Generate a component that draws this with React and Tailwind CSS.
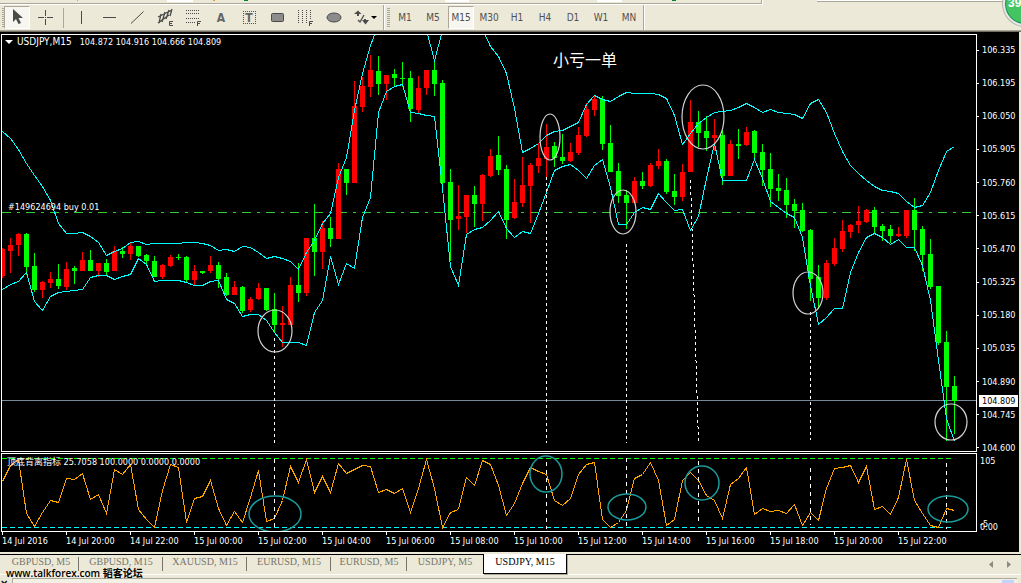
import React, { useState } from "react";
import clsx from "clsx";

// high, low, body top, body bottom, 1 = red (up) / 0 = green (down)
const candles = [
  [248, 278, 249, 276, 1], [238, 273, 245, 251, 1], [233, 256, 234, 245, 1], [233, 275, 234, 267, 0],
  [253, 292, 266, 290, 0], [281, 298, 282, 290, 1], [272, 288, 279, 283, 1], [264, 289, 279, 286, 0],
  [262, 290, 269, 287, 1], [266, 284, 268, 271, 0], [252, 271, 260, 271, 1], [250, 271, 260, 271, 0],
  [263, 277, 263, 271, 1], [259, 275, 263, 272, 0], [246, 271, 251, 271, 1], [247, 258, 251, 254, 0],
  [243, 260, 246, 254, 1], [246, 257, 246, 256, 0], [254, 264, 255, 261, 0], [256, 277, 261, 277, 0],
  [264, 279, 265, 277, 1], [255, 267, 257, 266, 1], [254, 260, 257, 258, 0], [256, 282, 257, 280, 0],
  [265, 285, 271, 280, 1], [271, 274, 271, 273, 0], [256, 273, 265, 271, 1], [262, 288, 265, 279, 0],
  [273, 296, 277, 295, 0], [281, 295, 287, 295, 1], [286, 313, 287, 311, 0], [297, 312, 299, 310, 1],
  [283, 300, 288, 299, 1], [288, 311, 288, 310, 0], [293, 332, 309, 325, 0], [306, 347, 323, 325, 1],
  [277, 325, 285, 325, 1], [263, 302, 285, 293, 0], [238, 296, 238, 293, 1], [204, 276, 238, 252, 0],
  [221, 269, 228, 252, 1], [217, 247, 228, 239, 0], [163, 239, 169, 239, 1], [169, 195, 169, 183, 0],
  [81, 183, 106, 183, 1], [77, 112, 86, 107, 1], [55, 97, 70, 87, 1], [56, 95, 71, 84, 0],
  [75, 100, 75, 84, 1], [69, 86, 74, 78, 0], [62, 87, 78, 79, 0], [71, 122, 78, 109, 0],
  [76, 113, 88, 110, 1], [70, 95, 70, 88, 1], [61, 96, 70, 84, 0], [80, 185, 83, 183, 0],
  [169, 261, 182, 220, 0], [185, 230, 216, 219, 1], [195, 233, 195, 217, 1], [186, 227, 195, 204, 0],
  [174, 221, 175, 204, 1], [149, 177, 156, 176, 1], [136, 175, 155, 170, 0], [165, 239, 169, 220, 0],
  [179, 219, 202, 218, 1], [157, 207, 185, 203, 1], [163, 223, 165, 186, 1], [143, 173, 158, 166, 1],
  [124, 177, 147, 159, 1], [142, 167, 146, 158, 0], [134, 164, 157, 161, 0], [143, 162, 152, 161, 1],
  [127, 155, 135, 153, 1], [103, 137, 109, 136, 1], [95, 116, 99, 110, 1], [96, 150, 99, 144, 0],
  [125, 172, 143, 172, 0], [163, 203, 171, 196, 0], [190, 229, 195, 203, 0], [177, 203, 181, 203, 1],
  [172, 189, 181, 186, 0], [163, 187, 165, 186, 1], [149, 169, 161, 166, 1], [159, 194, 161, 192, 0],
  [174, 205, 191, 197, 0], [164, 201, 172, 197, 1], [100, 172, 122, 172, 1], [111, 147, 122, 133, 0],
  [116, 151, 131, 138, 0], [119, 151, 135, 138, 1], [130, 185, 135, 176, 0], [140, 176, 144, 176, 1],
  [129, 159, 144, 146, 0], [127, 146, 132, 145, 1], [130, 159, 131, 153, 0], [144, 186, 152, 170, 0],
  [153, 207, 169, 189, 0], [174, 201, 188, 191, 0], [178, 218, 190, 205, 0], [199, 228, 204, 211, 0],
  [203, 232, 210, 231, 0], [229, 301, 230, 279, 0], [265, 309, 277, 298, 0], [260, 300, 263, 298, 1],
  [238, 266, 248, 264, 1], [220, 252, 231, 249, 1], [224, 238, 225, 232, 1], [206, 233, 221, 225, 1],
  [209, 223, 210, 222, 1], [207, 234, 210, 227, 0], [224, 241, 226, 231, 0], [225, 243, 229, 236, 0],
  [227, 237, 234, 236, 1], [210, 238, 210, 236, 1], [198, 251, 210, 230, 0], [226, 271, 229, 255, 0],
  [239, 289, 254, 287, 0], [286, 345, 286, 343, 0], [331, 441, 342, 387, 0], [376, 434, 386, 401, 0],
];

// bands, one value per bar
const upperBand = [
  131, 138, 149, 163, 175, 186, 200, 223, 233, 233, 232, 236, 242, 255, 251, 248, 242, 241, 244, 243,
  243, 243, 243, 242, 242, 243, 245, 250, 249, 251, 246, 247, 252, 258, 256, 258, 261, 269, 252, 240,
  223, 213, 177, 157, 110, 73, 45, 24, 10, 5, 5, 10, 15, 30, 60, 30, 5, 5, 5, 10,
  29, 46, 56, 73, 108, 152, 148, 143, 135, 131, 130, 126, 122, 104, 95, 99, 101, 96, 92, 93,
  93, 93, 94, 98, 115, 144, 133, 123, 117, 112, 111, 110, 107, 103, 107, 112, 109, 112, 113, 114,
  118, 103, 99, 112, 133, 151, 165, 173, 180, 186, 190, 191, 193, 201, 207, 205, 192, 170, 151, 146,
];

const lowerBand = [
  289, 284, 281, 272, 301, 310, 296, 292, 291, 290, 289, 277, 275, 275, 279, 276, 274, 258, 264, 281,
  280, 280, 280, 282, 285, 285, 281, 280, 299, 303, 316, 314, 314, 320, 332, 342, 342, 342, 345, 312,
  300, 256, 284, 263, 268, 217, 197, 112, 91, 86, 84, 112, 113, 115, 116, 188, 266, 285, 234, 229,
  227, 220, 211, 228, 237, 231, 233, 213, 192, 170, 166, 164, 170, 178, 165, 159, 187, 224, 224, 212,
  207, 209, 193, 202, 210, 209, 230, 216, 178, 143, 180, 180, 180, 180, 159, 178, 201, 207, 213, 217,
  237, 285, 324, 317, 308, 308, 272, 252, 237, 233, 237, 244, 239, 247, 247, 265, 300, 360, 418, 441,
];

const oscillator = [
  481, 465, 459, 513, 526, 512, 500, 502, 478, 479, 473, 499, 494, 513, 469, 474, 464, 509, 519, 527,
  490, 464, 467, 522, 498, 496, 480, 508, 525, 511, 522, 497, 470, 521, 518, 500, 466, 482, 459, 492,
  476, 492, 463, 473, 469, 465, 466, 492, 489, 493, 488, 512, 488, 459, 488, 527, 512, 509, 477, 485,
  460, 464, 485, 515, 503, 483, 467, 471, 474, 500, 505, 498, 474, 464, 462, 519, 527, 522, 510, 478,
  474, 462, 480, 525, 519, 480, 472, 480, 495, 500, 518, 484, 478, 467, 514, 508, 511, 510, 513, 504,
  525, 512, 520, 488, 468, 467, 465, 482, 466, 509, 506, 514, 497, 459, 500, 513, 525, 527, 508, 510,
];

const priceLabels = [
  "106.335", "106.195", "106.050", "105.905", "105.760", "105.615", "105.470",
  "105.325", "105.180", "105.035", "104.890", "104.745", "104.600",
];

const timeLabels = [
  "14 Jul 2016", "14 Jul 20:00", "14 Jul 22:00", "15 Jul 00:00", "15 Jul 02:00",
  "15 Jul 04:00", "15 Jul 06:00", "15 Jul 08:00", "15 Jul 10:00", "15 Jul 12:00",
  "15 Jul 14:00", "15 Jul 16:00", "15 Jul 18:00", "15 Jul 20:00", "15 Jul 22:00",
];

const periods = ["M1", "M5", "M15", "M30", "H1", "H4", "D1", "W1", "MN"];

const chartTabs = [
  "GBPUSD, M5", "GBPUSD, M15", "XAUUSD, M15", "EURUSD, M15", "EURUSD, M5", "USDJPY, M5", "USDJPY, M15",
];

const priceMarks = [
  [275, 331, 17, 21], [550, 137, 10, 23], [623, 212, 13, 22],
  [703, 117, 21, 32], [808, 293, 15, 21], [951, 422, 16, 18],
];

const oscillatorMarks = [
  [275, 514, 26, 18], [546, 474, 16, 18], [627, 507, 19, 13], [702, 483, 17, 17], [948, 509, 20, 13],
];

const priceGuides = [
  [274, 338, 274, 443], [546, 177, 546, 443], [626, 244, 626, 443], [690, 180, 698, 443], [810, 312, 810, 440],
];

const oscillatorGuides = [
  [274, 459, 527], [546, 462, 529], [626, 458, 529], [698, 461, 524], [810, 468, 525], [946, 463, 529],
];

const toPoints = (values) => values.map((y, i) => `${2 + i * 8},${y}`).join(" ");

const toolIcons = {
  Cursor: (
    <path d="M7 3V16L10 13L12.500 18L15 17L12.500 12H17Z" fill="#4a4a4a" />
  ),
  Crosshair: (
    <path d="M11.500 4V10M11.500 13V19M4 11.500H10M13 11.500H19M11.500 11V12" stroke="#4a4a4a" />
  ),
  "Vertical line": <path d="M11.500 5V18" stroke="#4a4a4a" />,
  "Horizontal line": <path d="M5 11.500H18" stroke="#4a4a4a" />,
  Trendline: <path d="M5 17.500L17.500 5.500" stroke="#4a4a4a" />,
  "Equidistant channel": (
    <g fill="none" stroke="#4a4a4a">
      <path d="M4 11L18 4M4 17L15 9M7 8L5 17M11 6L8 16M15 4L12 13M18 3L16 10" strokeWidth="1.300" />
      <path d="M19 15.500H15.500V19.500H19M15.500 17.500H18" />
    </g>
  ),
  "Fibonacci retracement": (
    <g fill="none" stroke="#4a4a4a">
      <path d="M4 4.500H18M4 7.500H18M4 12.500H18M4 16.500H13" strokeDasharray="1 1" />
      <path d="M15.500 20V15.500H19M15.500 17.500H18" />
    </g>
  ),
  Rectangle: <rect x="5.500" y="7.500" width="12" height="8" rx="1" fill="#8c8c8c" stroke="#4a4a4a" />,
  "Cycle lines": (
    <g fill="none" stroke="#4a4a4a">
      <path d="M4.500 4V18M8.500 4V18M12.500 4V18M16.500 4V13" strokeDasharray="1 1" />
      <path d="M15.500 20V15.500H19M15.500 17.500H18" />
    </g>
  ),
  Ellipse: <ellipse cx="12" cy="11.500" rx="7" ry="4.500" fill="#8c8c8c" stroke="#4a4a4a" />,
};

const ToolButton = ({ name, pressed, onClick, children }) => (
  <button
    type="button"
    aria-label={name}
    title={name}
    onClick={onClick}
    className={clsx(
      "w-[26px] h-[23px] mx-px shrink-0 flex items-center justify-center border text-[10px] text-[#505050]",
      pressed ? "bg-[#f7f6f0] border-[#aca899] border-r-white border-b-white" : "border-transparent"
    )}
  >
    {children}
  </button>
);

const Grip = () => (
  <span className="w-[3px] h-5 ml-[2px] shrink-0 bg-[repeating-linear-gradient(#aca899_0_1px,transparent_1px_2px)]" />
);

const Toolbar = () => {
  const [tool, setTool] = useState("Cursor");
  const [period, setPeriod] = useState("M15");

  const renderTool = (name) => (
    <ToolButton key={name} name={name} pressed={tool === name} onClick={() => setTool(name)}>
      {name === "Text" ? (
        <span className="text-[12px] font-bold text-[#666666]">A</span>
      ) : name === "Text label" ? (
        <span className="w-[13px] h-[13px] flex items-center justify-center border border-dotted border-[#505050] text-[12px] font-bold text-[#666666]">
          T
        </span>
      ) : (
        <svg className="w-[23px] h-[23px] shrink-0" viewBox="0 0 23 23">{toolIcons[name]}</svg>
      )}
    </ToolButton>
  );

  return (
    <header className="relative h-8 shrink-0 overflow-hidden border-b border-[#716f64]">
      {/* lower edge of the toolbar row above */}
      <div className="h-[5px] flex items-start justify-between">
        <div className="w-[763px] h-[5px] flex border-b border-r border-white shadow-[inset_-1px_-1px_#aca899]">
          <span className="w-px h-px ml-[77px] bg-[#aca899]" />
          <span className="w-[26px] h-[2px] ml-[89px] bg-white" />
          <span className="w-[2px] h-px ml-[20px] bg-[#d9a520]" />
          <span className="w-[4px] h-px ml-[29px] bg-green-700" />
          <span className="w-[24px] h-[2px] ml-[197px] bg-white" />
          <span className="w-[25px] h-[2px] ml-[128px] bg-white" />
          <span className="w-[4px] h-px ml-[50px] bg-green-700" />
        </div>
        <div className="w-[204px] h-[2px] bg-white border-b border-[#aca899]" />
      </div>
      <div className="h-[26px] flex items-center border-b border-[#aca899] font-['DejaVu_Sans_Condensed','DejaVu_Sans',sans-serif]">
        <Grip />
        <div className="flex items-center -ml-[2px]">
          {["Cursor", "Crosshair"].map(renderTool)}
          <span className="w-px h-5 ml-1 mr-[3px] bg-[#aca899]" />
          {[
            "Vertical line", "Horizontal line", "Trendline", "Equidistant channel", "Fibonacci retracement",
            "Text", "Text label", "Rectangle", "Cycle lines", "Ellipse",
          ].map(renderTool)}
          <button type="button" aria-label="Arrows" className="w-[36px] h-[23px] pl-[6px]">
            <svg className="w-[26px] h-[23px]" viewBox="0 0 26 23">
              <path d="M1 8L5 4.500L8.500 8H6V10H4V8ZM9 14H11V13H13V14H16L12.500 18.500Z" fill="#4a4a4a" />
              <path d="M5 14L7 16L11 9" fill="none" stroke="#4a4a4a" strokeWidth="1.300" />
              <path d="M18 10H24L21 13Z" fill="#000" />
            </svg>
          </button>
        </div>
        <span className="w-[2px] h-[25px] bg-[#aca899] border-r border-white" />
        <Grip />
        <div className="flex items-center ml-px">
          {periods.map((item) => (
            <ToolButton key={item} name={item} pressed={period === item} onClick={() => setPeriod(item)}>
              {item}
            </ToolButton>
          ))}
        </div>
        <span className="w-[2px] h-[25px] bg-[#aca899] border-r border-white" />
      </div>
      <div className="absolute -top-[18px] -right-[26px] w-11 h-11 rounded-full border-2 border-[#e8e8e8] ring-1 ring-[#b5b3a8] bg-[#45c463] shadow-[inset_0_0_0_1px_#1d8a5c]">
        <span className="absolute left-[3px] top-[13px] text-[12px] leading-3 font-bold text-white font-['Liberation_Sans',sans-serif]">
          39
        </span>
      </div>
    </header>
  );
};

const PricePanel = () => (
  <section className="relative flex-1 min-h-0 border border-white">
    <svg className="block w-full h-full" viewBox="2 35 974 416" preserveAspectRatio="none">
      <g shapeRendering="crispEdges" fill="none">
        <path d="M2 212.500H976" stroke="#32cd32" strokeDasharray="9 6 3 6" />
        <path d="M2 400.500H976" stroke="#778899" />
        {candles.map(([high, low, top, bottom, up], i) => (
          <g key={i} fill={up ? "#ff0000" : "#00ff00"}>
            <rect x={2 + i * 8} y={high} width="1" height={low - high} />
            <rect x={i * 8} y={top} width="5" height={Math.max(bottom - top, 1)} />
          </g>
        ))}
        <g stroke="#00ffff" transform="translate(0.5 0.5)">
          <polyline points={toPoints(upperBand)} />
          <polyline points={toPoints(lowerBand)} />
        </g>
        <g stroke="#ffffff" strokeDasharray="3 3" transform="translate(0.5 0)">
          {priceGuides.map(([x1, y1, x2, y2]) => (
            <line key={x1} x1={x1} y1={y1} x2={x2} y2={y2} />
          ))}
        </g>
      </g>
      {priceMarks.map(([cx, cy, rx, ry]) => (
        <ellipse key={cx} cx={cx} cy={cy} rx={rx} ry={ry} fill="none" stroke="#d4d4d4" strokeWidth="1.200" />
      ))}
    </svg>
    <h1 className="absolute left-[3px] top-[1px] flex items-center gap-1">
      <svg className="w-[8px] h-[4px]" viewBox="0 0 8 4"><path d="M0 0H8L4 4Z" fill="#fff" /></svg>
      <span className="text-[10px]">USDJPY,M15</span>
      <span className="ml-1">104.872 104.916 104.666 104.809</span>
    </h1>
    <span className="absolute left-[6px] top-[166px]">#149624694 buy 0.01</span>
    <span className="absolute left-[551px] top-[16px] text-[16px] leading-4 font-['Noto_Sans_CJK_SC',sans-serif]">
      小亏一单
    </span>
  </section>
);

const OscillatorPanel = () => (
  <section className="relative h-[79px] shrink-0 border border-white">
    <svg className="block w-full h-full" viewBox="2 454 974 77" preserveAspectRatio="none">
      <g shapeRendering="crispEdges" fill="none">
        <path d="M2 458.500H954" stroke="#00ff00" strokeDasharray="5 3" />
        <path d="M2 527.500H954" stroke="#00ffff" strokeDasharray="5 3" />
        <polyline points={toPoints(oscillator)} stroke="#ffa500" transform="translate(0.5 0.5)" />
        {oscillatorGuides.map(([x, y1, y2]) => (
          <path key={x} d={`M${x + 0.5} ${y1}V${y2}`} stroke="#fff" strokeDasharray="4 4" />
        ))}
      </g>
      {oscillatorMarks.map(([cx, cy, rx, ry]) => (
        <ellipse key={cx} cx={cx} cy={cy} rx={rx} ry={ry} fill="none" stroke="#1c9a9a" strokeWidth="1.500" />
      ))}
    </svg>
    <h2 className="absolute left-[5px] top-[2px]">顶底背离指标 25.7058 100.0000 0.0000 0.0000</h2>
  </section>
);

const PriceScale = () => (
  <aside className="w-[42px] shrink-0 flex flex-col">
    <div className="relative flex-1 min-h-0 pt-[10px]">
      <ul className="h-full flex flex-col justify-between">
        {priceLabels.map((label) => (
          <li key={label} className="flex items-center gap-[3px]">
            <span className="w-[2px] h-px bg-white" />
            {label}
          </li>
        ))}
      </ul>
      <span className="absolute left-[2px] right-px top-[361px] pl-[3px] bg-white text-black">104.809</span>
    </div>
    <div className="relative h-[79px] mb-[19px] pt-px pl-[3px] flex flex-col justify-between">
      <span>105</span>
      <span>0.00</span>
      <span className="absolute left-[3px] bottom-[3px]">-5</span>
    </div>
  </aside>
);

const TabBar = () => {
  const [active, setActive] = useState("USDJPY, M15");

  return (
    <nav className="h-[23px] shrink-0 pt-[2px] flex justify-between border-b border-white">
      <div className="flex-1 flex border-t border-black pl-[3px] font-['Liberation_Serif',serif] text-[10px]">
        {chartTabs.map((tab, index) => (
          <button
            key={tab}
            type="button"
            onClick={() => setActive(tab)}
            className={clsx(
              "relative h-[19px] flex items-center justify-center leading-3",
              tab.endsWith("M15") ? "w-[84px]" : "w-[76px]",
              active === tab
                ? "-mt-px h-[20px] pb-[3px] bg-white border border-t-0 border-black text-black shadow-[1px_1px_#aca899]"
                : "pb-[5px] text-[#77756a]"
            )}
          >
            {tab}
            {active !== tab && index < chartTabs.length - 2 ? (
              <span className="absolute right-0 top-[2px] w-px h-[14px] bg-[#77756a]" />
            ) : null}
          </button>
        ))}
      </div>
      <div className="flex items-center gap-[14px] border-t border-black pr-[10px]">
        <button type="button" aria-label="Scroll tabs left">
          <svg className="w-1 h-[7px]" viewBox="0 0 4 7"><path d="M4 0V7L0 3.500Z" fill="#8d8b80" /></svg>
        </button>
        <button type="button" aria-label="Scroll tabs right">
          <svg className="w-1 h-[7px]" viewBox="0 0 4 7"><path d="M0 0V7L4 3.500Z" fill="#8d8b80" /></svg>
        </button>
      </div>
    </nav>
  );
};

const App = () => {
  return (
    <div className="h-screen w-full flex flex-col overflow-hidden bg-[#ece9d8]">
      <Toolbar />
      <main className="flex-1 min-h-0 mr-[2px] pt-[2px] pl-px flex bg-black text-white text-[9px] leading-3 font-['DejaVu_Sans_Condensed','DejaVu_Sans','Noto_Sans_CJK_SC',sans-serif]">
        <div className="flex-1 min-w-0 flex flex-col">
          <PricePanel />
          <div className="h-px shrink-0" />
          <OscillatorPanel />
          <ol className="h-5 shrink-0 pl-px flex">
            {timeLabels.map((label) => (
              <li key={label} style={{ width: `${(64 / 975) * 100}%` }} className="shrink-0 whitespace-nowrap">
                <span className="block w-px h-[3px] bg-white" />
                {label}
              </li>
            ))}
          </ol>
        </div>
        <PriceScale />
      </main>
      <footer className="relative h-[31px] shrink-0 flex flex-col overflow-hidden">
        <TabBar />
        <div className="flex-1 pt-[3px] pl-3 pr-1">
          <div className="h-full flex justify-end border-t border-l border-[#aca899] bg-[#f3f1e6] pt-px pr-[3px]">
            <span className="w-3 h-full bg-[#c1d3fb]" />
          </div>
        </div>
        <span className="absolute left-0 top-[26px] text-[10px] leading-3 font-bold text-black font-['DejaVu_Sans',sans-serif]">×</span>
        <a
          href="#talkforex"
          className="absolute left-[6px] top-[15px] whitespace-nowrap text-[10px] leading-3 font-semibold text-black font-['Open_Sans','Noto_Sans_CJK_SC',sans-serif]"
        >
          www.talkforex.com 韬客论坛
        </a>
      </footer>
    </div>
  );
};

export default App;
